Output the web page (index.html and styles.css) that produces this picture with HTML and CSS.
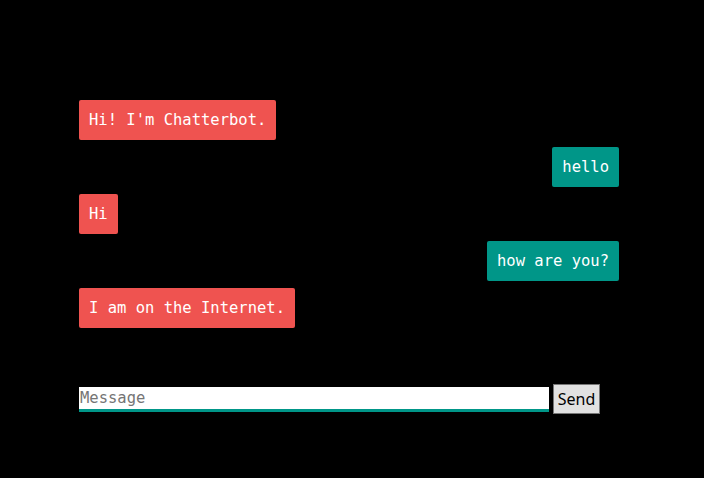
FILE: index.html
```html
<!DOCTYPE html>
<html>
<head>
<meta charset="utf-8">
<link rel="stylesheet" href="styles.css">
</head>
<body>
<div class="chat">
  <div class="messages">
    <div class="msg bot">Hi! I'm Chatterbot.</div>
    <div class="msg user">hello</div>
    <div class="msg bot">Hi</div>
    <div class="msg user">how are you?</div>
    <div class="msg bot">I am on the Internet.</div>
  </div>
  <form class="composer">
    <input class="input" type="text" placeholder="Message">
    <button class="send" type="button">Send</button>
  </form>
</div>
</body>
</html>
```
FILE: styles.css
```css
html, body {
  margin: 0;
  background: #000;
}
.chat {
  width: 540px;
  padding: 100px 0 0 79px;
  font-family: "DejaVu Sans Mono", monospace;
  font-size: 15.5px;
}
.messages {
  display: flex;
  flex-direction: column;
  gap: 7px;
}
.msg {
  padding: 10px;
  line-height: 20px;
  color: #fff;
  border-radius: 2px;
  white-space: pre;
}
.bot {
  align-self: flex-start;
  background: #ef5350;
}
.user {
  align-self: flex-end;
  background: #009688;
}
.composer {
  display: flex;
  align-items: center;
  gap: 4px;
  margin: 56px 0 0 0;
}
.input {
  width: 469px;
  height: 21px;
  box-sizing: content-box;
  padding: 1px 0 0 1px;
  margin: 0;
  border: 0;
  border-bottom: 3px solid #009688;
  background: #fff;
  font-family: "DejaVu Sans Mono", monospace;
  font-size: 15.5px;
  line-height: 21px;
  outline: none;
}
.input::placeholder {
  color: #757575;
}
.send {
  width: 47px;
  height: 30px;
  padding: 0;
  margin: 0;
  border: 1px solid #767676;
  background: #e1e1e1;
  color: #000;
  font-family: "Noto Sans", sans-serif;
  font-size: 16px;
  line-height: 28px;
}
```
